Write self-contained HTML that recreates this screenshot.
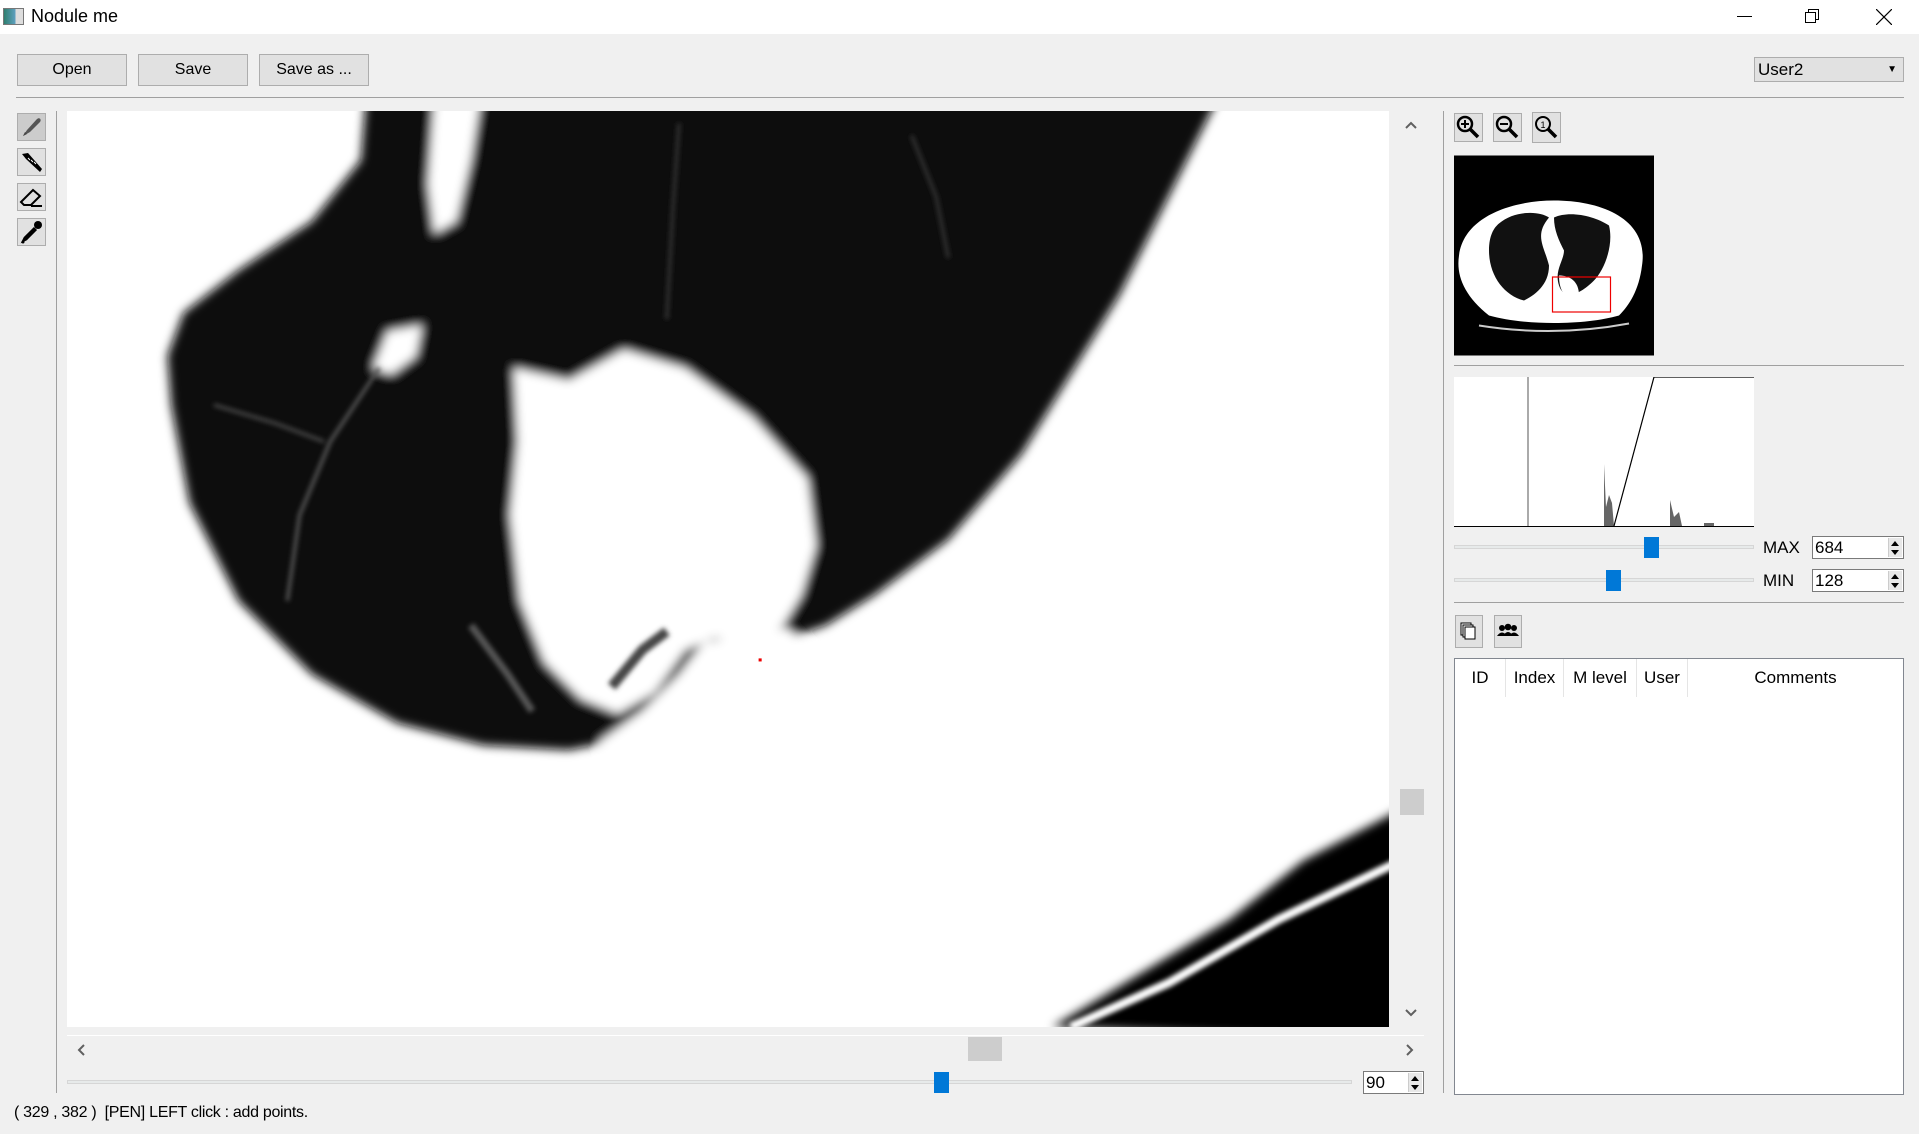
<!DOCTYPE html>
<html><head><meta charset="utf-8"><style>
*{margin:0;padding:0;box-sizing:border-box}
body{width:1919px;height:1134px;background:#f0f0f0;font-family:"Liberation Sans","Noto Sans CJK JP",sans-serif;position:relative;overflow:hidden;color:#000}
.a{position:absolute}
.btn{position:absolute;background:#e1e1e1;border:1px solid #adadad;font-size:16px;text-align:center;line-height:30px}
.tb{position:absolute;background:#e1e1e1;border:1px solid #adadad}
.hl{position:absolute;height:1px;background:#a0a0a0}
.vl{position:absolute;width:1px;background:#a0a0a0}
.spin{position:absolute;background:#fff;border:1px solid #7a7a7a;font-size:17px;padding-left:2px;line-height:21px}
.spin .ar{position:absolute;right:1px;top:1px;bottom:1px;width:14px;background:#e8e8e8;border-left:1px solid #ccc}
.thumbb{position:absolute;width:15px;background:#0078d7}
.trk{position:absolute;height:4px;background:#e7eaea;border:1px solid #d6d6d6}
.th{position:absolute;top:0;height:38px;font-size:17px;line-height:38px;border-right:1px solid #e5e5e5;text-align:center}
</style></head><body>
<!-- title bar -->
<div class="a" style="left:0;top:0;width:1919px;height:34px;background:#fff"></div>
<div class="a" style="left:3px;top:8px;width:21px;height:17px;border:1px solid #777;background:linear-gradient(90deg,#2f7f6f 0,#5fa0c0 60%,#ddd 60%)"></div>
<div class="a" style="left:31px;top:6px;font-size:18px">Nodule me</div>
<div class="a" style="left:1737px;top:16px;width:15px;height:1px;background:#000"></div>
<svg class="a" style="left:1804px;top:8px" width="16" height="16"><rect x="1.5" y="4.5" width="10" height="10" fill="none" stroke="#000"/><path d="M4.5 4.5V1.5H14.5V11.5H11.5" fill="none" stroke="#000"/></svg>
<svg class="a" style="left:1876px;top:9px" width="16" height="16"><path d="M0 0L16 16M16 0L0 16" stroke="#000" stroke-width="1.2"/></svg>

<!-- top buttons -->
<div class="btn" style="left:17px;top:54px;width:110px;height:32px">Open</div>
<div class="btn" style="left:138px;top:54px;width:110px;height:32px">Save</div>
<div class="btn" style="left:259px;top:54px;width:110px;height:32px">Save as ...</div>
<div class="a" style="left:1754px;top:57px;width:150px;height:25px;background:#e1e1e1;border:1px solid #adadad;font-size:17px;line-height:23px;padding-left:3px">User2<span style="position:absolute;right:6px;top:0;font-size:10px">▼</span></div>
<div class="hl" style="left:16px;top:97px;width:1888px"></div>

<!-- left tools -->
<div class="tb" style="left:17px;top:113px;width:29px;height:28px;background:#ccc"><svg width="27" height="26"><path d="M5 22L9 16L19 5C21 3 24 5 22 8L12 18Z" fill="#555"/><path d="M5 22L7 18L9 20Z" fill="#444"/></svg></div>
<div class="tb" style="left:17px;top:148px;width:29px;height:28px"><svg width="27" height="26"><path d="M4 5L10 4L24 20L22 23L8 10Z" fill="#000"/><path d="M10 9L12 11M13 11L15 13M16 13L18 15" stroke="#fff" stroke-width="1"/></svg></div>
<div class="tb" style="left:17px;top:183px;width:29px;height:28px"><svg width="27" height="26"><path d="M3 18L15 6L22 12L13 21H6Z" fill="none" stroke="#000" stroke-width="2"/><path d="M13 22H24" stroke="#000" stroke-width="2"/></svg></div>
<div class="tb" style="left:17px;top:218px;width:29px;height:28px"><svg width="27" height="26"><circle cx="20" cy="6" r="4" fill="#000"/><path d="M17 9L7 19L6 21L8 20L18 10" stroke="#000" stroke-width="3" fill="none"/><circle cx="5" cy="23" r="1.5" fill="#000"/></svg></div>
<div class="vl" style="left:56px;top:111px;height:982px"></div>

<!-- CT image -->
<svg class="a" style="left:67px;top:111px" width="1322" height="916" viewBox="0 0 1080 748" preserveAspectRatio="none">
<defs><filter id="b" x="-10%" y="-10%" width="120%" height="120%"><feGaussianBlur stdDeviation="4"/></filter><filter id="b2"><feGaussianBlur stdDeviation="2"/></filter></defs>
<rect width="1080" height="748" fill="#fff"/>
<g filter="url(#b)">
<path d="M245 -20L945 -20L860 150L780 280L720 350L660 395L620 420L585 432L560 440L520 480L470 510L410 522L340 518L270 500L200 460L140 400L100 320L85 240L82 200L95 165L140 130L200 90L240 40Z" fill="#080808"/>
<path d="M365 210L410 220L455 195L505 210L560 250L605 300L612 355L600 395L585 420L560 438L530 430L505 440L480 475L450 492L420 480L390 450L370 400L362 330L368 270Z" fill="#fff"/>
<path d="M520 434L588 422L620 450L560 520L440 530L435 515L470 490L500 460Z" fill="#fff"/>
<path d="M300 -10L338 -10L330 40L318 90L300 100L295 60Z" fill="#fff"/>
<path d="M262 180L290 175L285 200L265 215L250 210Z" fill="#fff"/>
<path d="M805 748L950 660L1010 612L1090 570L1090 760Z" fill="#000"/>
</g>
<g filter="url(#b2)" fill="none">
<path d="M1090 612L990 660L900 712L820 748" stroke="#fff" stroke-width="7"/>
<path d="M255 210L215 270L190 330L180 400" stroke="#555" stroke-width="3"/>
<path d="M120 240L170 255L210 270" stroke="#444" stroke-width="3"/>
<path d="M500 10L495 80L490 170" stroke="#333" stroke-width="3"/>
<path d="M690 20L710 70L720 120" stroke="#333" stroke-width="3"/>
<path d="M330 420L360 460L380 490" stroke="#555" stroke-width="6"/>
<path d="M445 470L470 440L490 425" stroke="#444" stroke-width="8"/>
</g>
<rect x="565" y="447" width="2.5" height="2.5" fill="#e00"/>
</svg>

<!-- vertical scrollbar -->
<svg class="a" style="left:1404px;top:120px" width="14" height="10"><path d="M2 8L7 3L12 8" stroke="#606060" stroke-width="2" fill="none"/></svg>
<div class="a" style="left:1400px;top:789px;width:24px;height:26px;background:#cdcdcd"></div>
<svg class="a" style="left:1404px;top:1008px" width="14" height="10"><path d="M2 2L7 7L12 2" stroke="#606060" stroke-width="2" fill="none"/></svg>
<div class="a" style="left:67px;top:1035px;width:1357px;height:1px;background:#fff"></div>
<!-- horizontal scrollbar -->
<svg class="a" style="left:76px;top:1043px" width="10" height="14"><path d="M8 2L3 7L8 12" stroke="#606060" stroke-width="2" fill="none"/></svg>
<div class="a" style="left:968px;top:1037px;width:34px;height:24px;background:#cdcdcd"></div>
<svg class="a" style="left:1405px;top:1043px" width="10" height="14"><path d="M2 2L7 7L2 12" stroke="#606060" stroke-width="2" fill="none"/></svg>
<!-- bottom slider -->
<div class="trk" style="left:67px;top:1080px;width:1285px"></div>
<div class="thumbb" style="left:934px;top:1072px;height:21px"></div>
<div class="spin" style="left:1363px;top:1071px;width:61px;height:23px">90<div class="ar"><svg width="12" height="20"><path d="M2 8L6 3L10 8Z M2 12L6 17L10 12Z" fill="#000"/></svg></div></div>
<div class="a" style="left:14px;top:1104px;font-size:16px;letter-spacing:-0.3px">( 329 , 382 )&nbsp; [PEN] LEFT click : add points.</div>

<!-- right panel -->
<div class="vl" style="left:1443px;top:111px;height:982px"></div>
<div class="tb" style="left:1454px;top:113px;width:29px;height:29px"><svg width="27" height="27"><circle cx="10" cy="10" r="7" fill="none" stroke="#000" stroke-width="2.5"/><path d="M15 15L23 23" stroke="#000" stroke-width="3.5"/><path d="M6 10H14M10 6V14" stroke="#000" stroke-width="2"/></svg></div>
<div class="tb" style="left:1493px;top:113px;width:29px;height:29px"><svg width="27" height="27"><circle cx="10" cy="10" r="7" fill="none" stroke="#000" stroke-width="2.5"/><path d="M15 15L23 23" stroke="#000" stroke-width="3.5"/><path d="M6 10H14" stroke="#000" stroke-width="2"/></svg></div>
<div class="tb" style="left:1532px;top:112px;width:29px;height:31px"><svg width="27" height="29"><circle cx="10" cy="11" r="7" fill="none" stroke="#000" stroke-width="2"/><path d="M15 16L23 24" stroke="#000" stroke-width="3.5"/><text x="7.5" y="15" font-size="9" font-family="Liberation Sans">1</text></svg></div>
<!-- thumbnail -->
<svg class="a" style="left:1454px;top:155px" width="200" height="201" viewBox="0 0 200 200">
<rect width="200" height="200" fill="#000"/>
<path d="M5 100C10 60 60 45 100 45C150 45 195 65 188 110C185 135 175 150 165 160C130 170 70 170 35 160C10 140 2 120 5 100Z" fill="#fff"/>
<path d="M25 170Q100 182 175 168" stroke="#ccc" stroke-width="2" fill="none"/>
<path d="M45 68C60 55 85 55 95 62C80 80 90 90 95 110C95 130 80 140 70 145C50 140 35 120 35 95C35 80 40 72 45 68Z" fill="#111"/>
<path d="M100 62C115 55 140 60 155 70C160 90 150 115 140 125C125 140 110 145 105 130C100 115 110 105 110 95C105 85 100 75 100 62Z" fill="#111"/>
<path d="M105 120C115 120 125 125 125 140C115 145 105 140 105 120Z" fill="#fff"/>
<rect x="98.5" y="121.5" width="58" height="35" fill="none" stroke="#e00" stroke-width="1.2"/>
</svg>
<div class="hl" style="left:1454px;top:365px;width:450px"></div>
<!-- histogram -->
<svg class="a" style="left:1454px;top:377px" width="300" height="150">
<rect width="300" height="150" fill="#fff"/>
<path d="M74 0V149" stroke="#555" stroke-width="1"/>
<path d="M150 149V87L152 130L155 118L158 126L160 149Z M216 149V123L220 140L225 135L228 149Z M250 149V146H260V149Z" fill="#666"/>
<path d="M160 149L200 0H300" stroke="#000" stroke-width="1.2" fill="none"/>
<path d="M0 149.5H300" stroke="#000" stroke-width="1"/>
</svg>
<div class="trk" style="left:1454px;top:545px;width:300px"></div>
<div class="thumbb" style="left:1644px;top:537px;height:21px"></div>
<div class="trk" style="left:1454px;top:578px;width:300px"></div>
<div class="thumbb" style="left:1606px;top:570px;height:21px"></div>
<div class="a" style="left:1763px;top:538px;font-size:17px">MAX</div>
<div class="a" style="left:1763px;top:571px;font-size:17px">MIN</div>
<div class="spin" style="left:1812px;top:536px;width:92px;height:23px">684<div class="ar"><svg width="12" height="20"><path d="M2 8L6 3L10 8Z M2 12L6 17L10 12Z" fill="#000"/></svg></div></div>
<div class="spin" style="left:1812px;top:569px;width:92px;height:23px">128<div class="ar"><svg width="12" height="20"><path d="M2 8L6 3L10 8Z M2 12L6 17L10 12Z" fill="#000"/></svg></div></div>
<div class="hl" style="left:1454px;top:602px;width:450px"></div>
<div class="tb" style="left:1455px;top:615px;width:28px;height:33px"><svg width="26" height="31"><rect x="5" y="7" width="10" height="12" fill="#fff" stroke="#000"/><rect x="7" y="9" width="10" height="12" fill="#fff" stroke="#000"/><rect x="9" y="11" width="10" height="12" fill="#fff" stroke="#000"/></svg></div>
<div class="tb" style="left:1494px;top:615px;width:28px;height:33px"><svg width="26" height="31"><circle cx="7" cy="12" r="3" fill="#000"/><circle cx="13" cy="11" r="3.3" fill="#000"/><circle cx="19" cy="12" r="3" fill="#000"/><path d="M2 20Q7 13 12 20Z M8 20Q13 12 18 20Z M14 20Q19 13 24 20Z" fill="#000"/></svg></div>
<!-- table -->
<div class="a" style="left:1454px;top:658px;width:450px;height:437px;background:#fff;border:1px solid #828790">
<div class="th" style="left:0;width:51px">ID</div>
<div class="th" style="left:51px;width:58px">Index</div>
<div class="th" style="left:109px;width:73px">M level</div>
<div class="th" style="left:182px;width:51px">User</div>
<div class="th" style="left:233px;width:215px;border-right:none">Comments</div>
</div>
</body></html>
